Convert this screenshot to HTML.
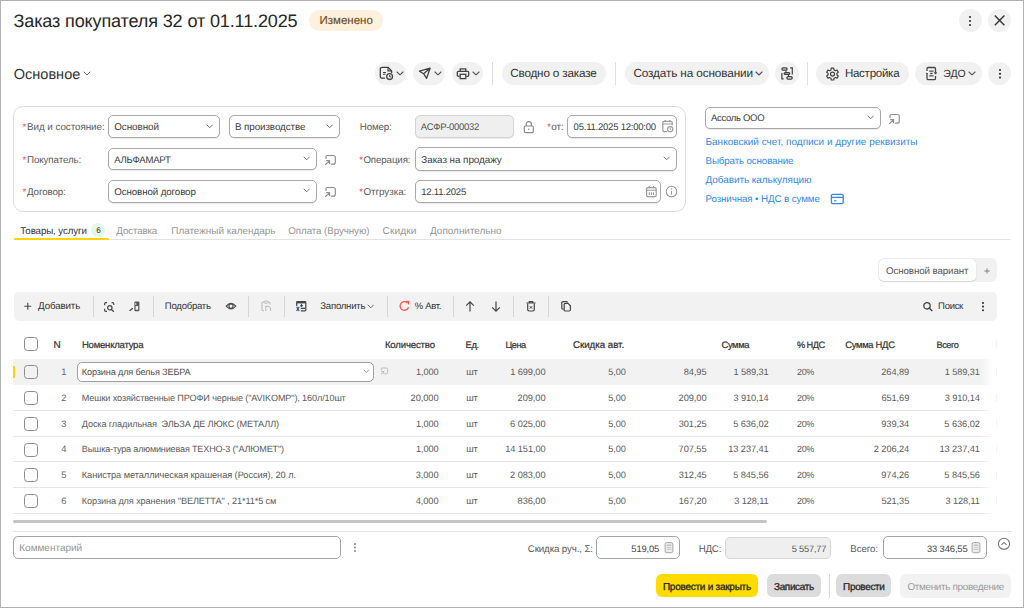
<!DOCTYPE html><html><head><meta charset="utf-8"><style>
html,body{margin:0;padding:0;width:1024px;height:608px;overflow:hidden;background:#fff;font-family:"Liberation Sans", sans-serif;text-rendering:geometricPrecision;}
#root{position:relative;width:1024px;height:608px;overflow:hidden;}
</style></head><body><div id="root">
<div style="position:absolute;left:0;top:0;width:1024px;height:608px;box-sizing:border-box;border:1px solid #b2b2b2"></div>
<div style="position:absolute;left:309px;top:10px;width:74px;height:21px;background:#fdf0dd;border-radius:10.5px;"></div>
<div style="position:absolute;left:958.8px;top:8.9px;width:23px;height:23px;background:#f1f1f1;border-radius:11.5px;"></div>
<svg style="position:absolute;left:967.2px;top:13.600000000000001px" width="6" height="14" viewBox="0 0 6 14" fill="none"><circle cx="3" cy="3" r="1.1" fill="#333"/><circle cx="3" cy="7" r="1.1" fill="#333"/><circle cx="3" cy="11" r="1.1" fill="#333"/></svg>
<div style="position:absolute;left:988px;top:8.9px;width:23px;height:23px;background:#f1f1f1;border-radius:11.5px;"></div>
<svg style="position:absolute;left:993px;top:14px" width="13" height="13" viewBox="0 0 13 13" fill="none"><path d="M1.8 1.6 L11.4 11.3 M11.4 1.6 L1.8 11.3" stroke="#333" stroke-width="1.4"/></svg>
<svg style="position:absolute;left:83.0px;top:71.0px" width="8" height="5" viewBox="0 0 8 5" fill="none"><path d="M1 1 L4.0 4 L7 1" stroke="#666" stroke-width="1" stroke-linecap="round" stroke-linejoin="round"/></svg>
<div style="position:absolute;left:375px;top:62px;width:31.3px;height:23px;background:#f1f1f1;border-radius:11.5px;"></div>
<svg style="position:absolute;left:379px;top:66px" width="16" height="16" viewBox="0 0 16 16" fill="none"><path d="M6 12.2 H3.3 Q1.3 12.2 1.3 10.2 V3.3 Q1.3 1.3 3.3 1.3 H9 L12.6 4.9 V7" stroke="#404040" stroke-width="1.3" stroke-linejoin="round"/><path d="M9 1.5 V4.9 H12.5" stroke="#404040" stroke-width="1.1"/><path d="M4 6.5 H7 M4 8.2 H6.5" stroke="#404040" stroke-width="1.1"/><circle cx="10.6" cy="10.6" r="2.9" stroke="#404040" stroke-width="1.3"/><path d="M10.6 9 V10.8 H12" stroke="#404040" stroke-width="1"/></svg>
<svg style="position:absolute;left:395.8px;top:70.89999999999999px" width="8" height="4.8" viewBox="0 0 8 4.8" fill="none"><path d="M1 1 L4.0 3.8 L7 1" stroke="#555" stroke-width="1.1" stroke-linecap="round" stroke-linejoin="round"/></svg>
<div style="position:absolute;left:413.4px;top:62px;width:31.2px;height:23px;background:#f1f1f1;border-radius:11.5px;"></div>
<svg style="position:absolute;left:418px;top:67px" width="14" height="13" viewBox="0 0 14 13" fill="none"><path d="M12.1 1.2 L1.5 4.2 L5.6 6.7 L8.6 11.4 Z M12.1 1.2 L5.6 6.7" stroke="#404040" stroke-width="1.3" stroke-linejoin="round"/></svg>
<svg style="position:absolute;left:434.0px;top:70.89999999999999px" width="8" height="4.8" viewBox="0 0 8 4.8" fill="none"><path d="M1 1 L4.0 3.8 L7 1" stroke="#555" stroke-width="1.1" stroke-linecap="round" stroke-linejoin="round"/></svg>
<div style="position:absolute;left:451.6px;top:62px;width:31.7px;height:23px;background:#f1f1f1;border-radius:11.5px;"></div>
<svg style="position:absolute;left:456px;top:67px" width="14" height="13" viewBox="0 0 14 13" fill="none"><path d="M4.2 4.3 V1.8 H9.8 V4.3" stroke="#404040" stroke-width="1.3"/><path d="M3.6 9.3 H2.4 Q1.3 9.3 1.3 8.2 V5.5 Q1.3 4.3 2.5 4.3 H11.5 Q12.7 4.3 12.7 5.5 V8.2 Q12.7 9.3 11.6 9.3 H10.4" stroke="#404040" stroke-width="1.3"/><rect x="4.2" y="7.3" width="5.6" height="4.3" stroke="#404040" stroke-width="1.3"/></svg>
<svg style="position:absolute;left:472.0px;top:70.89999999999999px" width="8" height="4.8" viewBox="0 0 8 4.8" fill="none"><path d="M1 1 L4.0 3.8 L7 1" stroke="#555" stroke-width="1.1" stroke-linecap="round" stroke-linejoin="round"/></svg>
<div style="position:absolute;left:491.8px;top:62px;width:1px;height:23px;background:#dedede;border-radius:0px;"></div>
<div style="position:absolute;left:501.6px;top:62px;width:104.4px;height:23px;background:#f1f1f1;border-radius:11.5px;"></div>
<div style="position:absolute;left:615px;top:62px;width:1px;height:23px;background:#dedede;border-radius:0px;"></div>
<div style="position:absolute;left:624.5px;top:62px;width:144.5px;height:23px;background:#f1f1f1;border-radius:11.5px;"></div>
<svg style="position:absolute;left:755.0px;top:71.1px" width="8" height="5" viewBox="0 0 8 5" fill="none"><path d="M1 1 L4.0 4 L7 1" stroke="#555" stroke-width="1.1" stroke-linecap="round" stroke-linejoin="round"/></svg>
<div style="position:absolute;left:775.1px;top:62px;width:23.7px;height:23px;background:#f1f1f1;border-radius:11.5px;"></div>
<svg style="position:absolute;left:779px;top:66px" width="16" height="16" viewBox="0 0 16 16" fill="none"><rect x="2.9" y="1.9" width="5.2" height="2.3" rx="1.1" stroke="#404040" stroke-width="1.25"/><rect x="5.2" y="6.5" width="5.5" height="1.9" rx="0.95" stroke="#404040" stroke-width="1.25"/><rect x="7.9" y="10.7" width="5.3" height="2.3" rx="1.1" stroke="#404040" stroke-width="1.25"/><path d="M7 4.5 V6.3 M9.5 8.5 V10.5" stroke="#404040" stroke-width="1"/><path d="M2.9 7 V12.9 H4.6 M11.1 1.9 H13.3 V8.6" stroke="#404040" stroke-width="1.2"/></svg>
<div style="position:absolute;left:807.3px;top:62px;width:1px;height:23px;background:#dedede;border-radius:0px;"></div>
<div style="position:absolute;left:816.4px;top:62px;width:92.4px;height:23px;background:#f1f1f1;border-radius:11.5px;"></div>
<svg style="position:absolute;left:825px;top:66.5px" width="15" height="15" viewBox="0 0 15 15" fill="none"><path d="M6.3 1.2 H8.7 L9.1 3 L10.4 3.7 L12.1 3.1 L13.3 5.2 L11.9 6.4 V7.8 L13.3 9 L12.1 11.1 L10.4 10.5 L9.1 11.2 L8.7 13 H6.3 L5.9 11.2 L4.6 10.5 L2.9 11.1 L1.7 9 L3.1 7.8 V6.4 L1.7 5.2 L2.9 3.1 L4.6 3.7 L5.9 3 Z" stroke="#404040" stroke-width="1.2" stroke-linejoin="round"/><circle cx="7.5" cy="7.1" r="2" stroke="#404040" stroke-width="1.2"/></svg>
<div style="position:absolute;left:915.2px;top:62px;width:66.5px;height:23px;background:#f1f1f1;border-radius:11.5px;"></div>
<svg style="position:absolute;left:924px;top:66px" width="14" height="15" viewBox="0 0 14 15" fill="none"><path d="M3 5 V2.6 Q3 1.5 4.3 1.5 H10.3 Q11.5 1.5 11.5 2.7 V6.8" stroke="#454545" stroke-width="1.3"/><path d="M3 7.5 V12.4 Q3 13.6 4.3 13.6 H10.3 Q11.5 13.6 11.5 12.4 V10" stroke="#454545" stroke-width="1.3"/><path d="M10.2 6.6 L11.5 8.3 L12.8 6.6 Z" fill="#454545" stroke="#454545" stroke-width="0.6"/><path d="M1.9 7.6 L3 7 L3.6 8" fill="#454545" stroke="#454545" stroke-width="0.8"/><path d="M5.2 5.2 H9.6 M6.2 7.5 H8.6 M5.2 9.8 H9.6" stroke="#505050" stroke-width="1.3"/></svg>
<svg style="position:absolute;left:967.6px;top:70.89999999999999px" width="8" height="4.8" viewBox="0 0 8 4.8" fill="none"><path d="M1 1 L4.0 3.8 L7 1" stroke="#555" stroke-width="1.1" stroke-linecap="round" stroke-linejoin="round"/></svg>
<div style="position:absolute;left:988px;top:62px;width:23.4px;height:23.3px;background:#f1f1f1;border-radius:11.7px;"></div>
<svg style="position:absolute;left:996.7px;top:66.8px" width="6" height="13.6" viewBox="0 0 6 13.6" fill="none"><circle cx="3" cy="3.0" r="1.1" fill="#333"/><circle cx="3" cy="6.8" r="1.1" fill="#333"/><circle cx="3" cy="10.6" r="1.1" fill="#333"/></svg>
<div style="position:absolute;left:13px;top:106.2px;width:673px;height:105.6px;background:#fff;border:1px solid #dcdcdc;box-sizing:border-box;border-radius:10px;"></div>
<div style="position:absolute;left:108.3px;top:115.3px;width:111.5px;height:22.8px;background:#fff;border:1.15px solid #a8a8a8;box-sizing:border-box;border-radius:5px;box-shadow:0 0.7px 0 rgba(0,0,0,0.10)"></div>
<svg style="position:absolute;left:206.3px;top:123.95px" width="7.4" height="4.7" viewBox="0 0 7.4 4.7" fill="none"><path d="M1 1 L3.7 3.7 L6.4 1" stroke="#707070" stroke-width="1" stroke-linecap="round" stroke-linejoin="round"/></svg>
<div style="position:absolute;left:229.4px;top:115.3px;width:110.5px;height:22.8px;background:#fff;border:1.15px solid #a8a8a8;box-sizing:border-box;border-radius:5px;box-shadow:0 0.7px 0 rgba(0,0,0,0.10)"></div>
<svg style="position:absolute;left:325.8px;top:123.95px" width="7.4" height="4.7" viewBox="0 0 7.4 4.7" fill="none"><path d="M1 1 L3.7 3.7 L6.4 1" stroke="#707070" stroke-width="1" stroke-linecap="round" stroke-linejoin="round"/></svg>
<div style="position:absolute;left:415.3px;top:115.3px;width:99px;height:22.8px;background:#efefef;border:1.15px solid #d4d4d4;box-sizing:border-box;border-radius:5px;box-shadow:0 0.7px 0 rgba(0,0,0,0.10)"></div>
<svg style="position:absolute;left:522px;top:119.5px" width="13" height="14" viewBox="0 0 13 14" fill="none"><path d="M4.2 6 V4.2 Q4.2 1.7 6.8 1.7 Q9.4 1.7 9.4 4.2 V6" stroke="#8a8a8a" stroke-width="1.2"/><rect x="2.3" y="6" width="9" height="6.6" rx="1.3" stroke="#8a8a8a" stroke-width="1.2"/><circle cx="6.8" cy="9.3" r="0.8" fill="#8a8a8a"/></svg>
<div style="position:absolute;left:567.4px;top:115.2px;width:109.4px;height:23.1px;background:#fff;border:1.15px solid #a8a8a8;box-sizing:border-box;border-radius:5px;box-shadow:0 0.7px 0 rgba(0,0,0,0.10)"></div>
<svg style="position:absolute;left:661px;top:119px" width="13" height="14" viewBox="0 0 13 14" fill="none"><path d="M6 12.6 H3.1 Q1.8 12.6 1.8 11.3 V3.6 Q1.8 2.4 3 2.4 H10 Q11.2 2.4 11.2 3.6 V6.2" stroke="#999" stroke-width="1.2"/><path d="M1.8 5 H11.2 M4.2 1 V3.2 M8.8 1 V3.2" stroke="#999" stroke-width="1.2"/><circle cx="9.2" cy="10.2" r="2.6" stroke="#999" stroke-width="1.1" fill="#fff"/><path d="M9.2 8.9 V10.3 L10.2 11" stroke="#999" stroke-width="0.9"/></svg>
<div style="position:absolute;left:108.3px;top:147.7px;width:208.5px;height:22.7px;background:#fff;border:1.15px solid #a8a8a8;box-sizing:border-box;border-radius:5px;box-shadow:0 0.7px 0 rgba(0,0,0,0.10)"></div>
<svg style="position:absolute;left:302.6px;top:156.25px" width="7.4" height="4.7" viewBox="0 0 7.4 4.7" fill="none"><path d="M1 1 L3.7 3.7 L6.4 1" stroke="#707070" stroke-width="1" stroke-linecap="round" stroke-linejoin="round"/></svg>
<svg style="position:absolute;left:323.5px;top:153.8px" width="13.0" height="12.0" viewBox="0 0 13 12" fill="none"><path d="M2 4.5 V2.8 Q2 1.5 3.3 1.5 H9.3 Q11.3 1.5 11.3 3.5 V8.2 Q11.3 10.2 9.3 10.2 H7.3" stroke="#8f8f8f" stroke-width="1.2" stroke-linecap="round"/><path d="M1.6 10.6 L5.6 6.6 M2.6 6.6 H5.6 V9.6" stroke="#8f8f8f" stroke-width="1.2" stroke-linecap="round" stroke-linejoin="round"/></svg>
<div style="position:absolute;left:415.3px;top:147.4px;width:261.5px;height:23.2px;background:#fff;border:1.15px solid #a8a8a8;box-sizing:border-box;border-radius:5px;box-shadow:0 0.7px 0 rgba(0,0,0,0.10)"></div>
<svg style="position:absolute;left:663.3px;top:156.45000000000002px" width="7.4" height="4.7" viewBox="0 0 7.4 4.7" fill="none"><path d="M1 1 L3.7 3.7 L6.4 1" stroke="#707070" stroke-width="1" stroke-linecap="round" stroke-linejoin="round"/></svg>
<div style="position:absolute;left:108.3px;top:180px;width:208.5px;height:22.7px;background:#fff;border:1.15px solid #a8a8a8;box-sizing:border-box;border-radius:5px;box-shadow:0 0.7px 0 rgba(0,0,0,0.10)"></div>
<svg style="position:absolute;left:302.6px;top:188.45000000000002px" width="7.4" height="4.7" viewBox="0 0 7.4 4.7" fill="none"><path d="M1 1 L3.7 3.7 L6.4 1" stroke="#707070" stroke-width="1" stroke-linecap="round" stroke-linejoin="round"/></svg>
<svg style="position:absolute;left:323.5px;top:186px" width="13.0" height="12.0" viewBox="0 0 13 12" fill="none"><path d="M2 4.5 V2.8 Q2 1.5 3.3 1.5 H9.3 Q11.3 1.5 11.3 3.5 V8.2 Q11.3 10.2 9.3 10.2 H7.3" stroke="#8f8f8f" stroke-width="1.2" stroke-linecap="round"/><path d="M1.6 10.6 L5.6 6.6 M2.6 6.6 H5.6 V9.6" stroke="#8f8f8f" stroke-width="1.2" stroke-linecap="round" stroke-linejoin="round"/></svg>
<div style="position:absolute;left:415.3px;top:179.5px;width:245.5px;height:23.2px;background:#fff;border:1.15px solid #a8a8a8;box-sizing:border-box;border-radius:5px;box-shadow:0 0.7px 0 rgba(0,0,0,0.10)"></div>
<svg style="position:absolute;left:644.5px;top:185px" width="13" height="13" viewBox="0 0 13 13" fill="none"><rect x="1.6" y="2.6" width="9.6" height="9" rx="1.3" stroke="#999" stroke-width="1.2"/><path d="M1.6 5.3 H11.2 M4.2 1 V3.2 M8.6 1 V3.2 M4.3 7.3 V10 M6.4 7.3 V10 M8.5 7.3 V10" stroke="#999" stroke-width="1.1"/></svg>
<svg style="position:absolute;left:665px;top:185px" width="13" height="13" viewBox="0 0 13 13" fill="none"><circle cx="6.5" cy="6.6" r="5.3" stroke="#999" stroke-width="1.1"/><path d="M6.5 5.8 V9.6" stroke="#999" stroke-width="1.1"/><circle cx="6.5" cy="3.9" r="0.7" fill="#999"/></svg>
<div style="position:absolute;left:705px;top:106.6px;width:175.6px;height:22.7px;background:#fff;border:1.15px solid #a8a8a8;box-sizing:border-box;border-radius:5px;box-shadow:0 0.7px 0 rgba(0,0,0,0.10)"></div>
<svg style="position:absolute;left:866.5999999999999px;top:115.25px" width="7.4" height="4.7" viewBox="0 0 7.4 4.7" fill="none"><path d="M1 1 L3.7 3.7 L6.4 1" stroke="#707070" stroke-width="1" stroke-linecap="round" stroke-linejoin="round"/></svg>
<svg style="position:absolute;left:887.5px;top:112.5px" width="13.0" height="12.0" viewBox="0 0 13 12" fill="none"><path d="M2 4.5 V2.8 Q2 1.5 3.3 1.5 H9.3 Q11.3 1.5 11.3 3.5 V8.2 Q11.3 10.2 9.3 10.2 H7.3" stroke="#8f8f8f" stroke-width="1.2" stroke-linecap="round"/><path d="M1.6 10.6 L5.6 6.6 M2.6 6.6 H5.6 V9.6" stroke="#8f8f8f" stroke-width="1.2" stroke-linecap="round" stroke-linejoin="round"/></svg>
<svg style="position:absolute;left:830px;top:192.5px" width="15" height="12" viewBox="0 0 15 12" fill="none"><rect x="1.4" y="1.4" width="11.8" height="9.2" rx="1.3" stroke="#2f89ec" stroke-width="1.3"/><path d="M1.4 4.4 H13.2" stroke="#2f89ec" stroke-width="1.3"/><path d="M4 7.8 H6.5" stroke="#2f89ec" stroke-width="1.1"/></svg>
<div style="position:absolute;left:90.6px;top:222.8px;width:14.5px;height:14.5px;background:#e6f7e9;border-radius:7.25px;"></div>
<div style="position:absolute;left:13.7px;top:238.8px;width:997.7px;height:1px;background:#e3e3e3;border-radius:0px;"></div>
<div style="position:absolute;left:13.7px;top:238px;width:95.1px;height:2.2px;background:#fcd400;border-radius:1px;"></div>
<div style="position:absolute;left:877.9px;top:258px;width:119.1px;height:24.2px;background:#f1f1f1;border-radius:6px;"></div>
<div style="position:absolute;left:878.6px;top:259px;width:97.4px;height:22px;background:#fff;border-radius:5px;box-shadow:0 0.5px 1.5px rgba(0,0,0,0.12)"></div>
<svg style="position:absolute;left:981px;top:264.5px" width="12" height="12" viewBox="0 0 12 12" fill="none"><path d="M6 3.4 V8.6 M3.4 6 H8.6" stroke="#777" stroke-width="0.9"/></svg>
<div style="position:absolute;left:13.6px;top:291.8px;width:983.6px;height:29px;background:#f2f2f2;border-radius:5px;"></div>
<svg style="position:absolute;left:22px;top:300px" width="12" height="12" viewBox="0 0 12 12" fill="none"><path d="M5.8 2.8 V9.7 M2.3 6.2 H9.3" stroke="#4a4a4a" stroke-width="1.15"/></svg>
<div style="position:absolute;left:92.5px;top:296px;width:1px;height:20.5px;background:#d6d6d6;border-radius:0px;"></div>
<svg style="position:absolute;left:103px;top:300.5px" width="13" height="12" viewBox="0 0 13 12" fill="none"><path d="M1.6 4.3 V2.9 Q1.6 1.6 2.9 1.6 H4 M1.6 7.7 V9.1 Q1.6 10.4 2.9 10.4 H4 M8.6 1.6 H9.5 Q10.8 1.6 10.8 2.9 V4" stroke="#444" stroke-width="1.2"/><circle cx="6.8" cy="6.8" r="2.2" stroke="#444" stroke-width="1.2"/><path d="M8.4 8.4 L10.8 10.8" stroke="#444" stroke-width="1.3"/></svg>
<svg style="position:absolute;left:128px;top:300px" width="13" height="12" viewBox="0 0 13 12" fill="none"><rect x="6.4" y="1.4" width="5" height="9.8" rx="1" fill="#555"/><rect x="7.6" y="6" width="2.6" height="3.8" fill="#f0f0f0"/><path d="M7.8 2.8 V5" stroke="#f0f0f0" stroke-width="0.9"/><path d="M1.6 10.8 L4.8 8.2" stroke="#444" stroke-width="1.3"/></svg>
<div style="position:absolute;left:152.7px;top:296px;width:1px;height:20.5px;background:#d6d6d6;border-radius:0px;"></div>
<svg style="position:absolute;left:224.5px;top:301px" width="12" height="10" viewBox="0 0 12 10" fill="none"><path d="M1.2 5.1 Q6 -0.3 10.8 5.1 Q6 10.5 1.2 5.1 Z" stroke="#4a4a4a" stroke-width="1.15"/><circle cx="6" cy="5.1" r="2.1" stroke="#4a4a4a" stroke-width="1.1"/></svg>
<div style="position:absolute;left:248.4px;top:296px;width:1px;height:20.5px;background:#d6d6d6;border-radius:0px;"></div>
<svg style="position:absolute;left:259.5px;top:300px" width="12" height="12" viewBox="0 0 12 12" fill="none"><path d="M4 10.8 H3 Q2 10.8 2 9.8 V3 Q2 2 3 2 H4 M8 2 H9 Q10 2 10 3 V4.5" stroke="#bdbdbd" stroke-width="1.1"/><rect x="4" y="1.2" width="4" height="2" rx="0.6" stroke="#bdbdbd" stroke-width="1"/><path d="M5.8 11 V6.2 H8.6 L10.6 8.2 V11" stroke="#bdbdbd" stroke-width="1.1"/></svg>
<div style="position:absolute;left:283.6px;top:296px;width:1px;height:20.5px;background:#d6d6d6;border-radius:0px;"></div>
<svg style="position:absolute;left:295px;top:300px" width="12" height="12" viewBox="0 0 12 12" fill="none"><path d="M1.7 6 V2.4 Q1.7 1.6 2.5 1.6 H10 Q10.8 1.6 10.8 2.4 V10 Q10.8 10.8 10 10.8 H5.8" stroke="#454545" stroke-width="1.2"/><path d="M1.7 2.6 H10.8" stroke="#454545" stroke-width="1.6"/><path d="M6.5 3.8 V6.3 M5.3 5.3 L6.5 6.5 L7.7 5.3 M5.8 8.4 H10.2" stroke="#454545" stroke-width="1.1"/><path d="M1.6 6.8 L4.2 10.8 M4.2 6.8 L1.6 10.8" stroke="#2b5a8a" stroke-width="1.2"/></svg>
<svg style="position:absolute;left:366.75px;top:303.90000000000003px" width="7.5" height="4.8" viewBox="0 0 7.5 4.8" fill="none"><path d="M1 1 L3.75 3.8 L6.5 1" stroke="#666" stroke-width="1" stroke-linecap="round" stroke-linejoin="round"/></svg>
<div style="position:absolute;left:386.7px;top:296px;width:1px;height:20.5px;background:#d6d6d6;border-radius:0px;"></div>
<svg style="position:absolute;left:397.5px;top:300px" width="13" height="12" viewBox="0 0 13 12" fill="none"><path d="M9.6 3.1 A4.3 4.3 0 1 0 10.5 7.2" stroke="#f4564b" stroke-width="1.3" fill="none"/><path d="M7.6 1.6 L10.6 1.4 L10.4 4.4" stroke="#f4564b" stroke-width="1.3" fill="none" stroke-linejoin="round"/></svg>
<div style="position:absolute;left:453.4px;top:296px;width:1px;height:20.5px;background:#d6d6d6;border-radius:0px;"></div>
<svg style="position:absolute;left:464.3px;top:299.8px" width="12" height="13" viewBox="0 0 12 13" fill="none"><path d="M6 11.5 V1.8 M2.2 5.6 L6 1.8 L9.8 5.6" stroke="#444" stroke-width="1.2"/></svg>
<svg style="position:absolute;left:489.5px;top:299.8px" width="12" height="13" viewBox="0 0 12 13" fill="none"><path d="M6 1.5 V11.2 M2.2 7.4 L6 11.2 L9.8 7.4" stroke="#444" stroke-width="1.2"/></svg>
<div style="position:absolute;left:513.3px;top:296px;width:1px;height:20.5px;background:#d6d6d6;border-radius:0px;"></div>
<svg style="position:absolute;left:524.7px;top:300px" width="12" height="12" viewBox="0 0 12 12" fill="none"><path d="M2.7 3.8 V9.6 Q2.7 11 4.1 11 H7.9 Q9.3 11 9.3 9.6 V3.8 M1.4 3 H10.6 M4.3 3 V1.6 H7.7 V3" stroke="#444" stroke-width="1.2"/><path d="M4.8 6.2 L7.2 8.6 M7.2 6.2 L4.8 8.6" stroke="#444" stroke-width="1"/></svg>
<div style="position:absolute;left:548.4px;top:296px;width:1px;height:20.5px;background:#d6d6d6;border-radius:0px;"></div>
<svg style="position:absolute;left:560px;top:300px" width="12" height="12" viewBox="0 0 12 12" fill="none"><path d="M3.6 9.2 H3 Q1.8 9.2 1.8 8 V2.8 Q1.8 1.6 3 1.6 H6.6 Q7.6 1.6 7.6 2.6" stroke="#444" stroke-width="1.2"/><path d="M4.2 10.6 V4.6 Q4.2 3.4 5.4 3.4 H8 L10.4 5.8 V9.8 Q10.4 11 9.2 11 H5.4 Q4.2 11 4.2 10.6" stroke="#444" stroke-width="1.2"/></svg>
<svg style="position:absolute;left:921.5px;top:301px" width="12" height="11" viewBox="0 0 12 11" fill="none"><circle cx="5" cy="4.8" r="3.2" stroke="#444" stroke-width="1.3"/><path d="M7.4 7.2 L10.3 10.1" stroke="#444" stroke-width="1.4"/></svg>
<svg style="position:absolute;left:979.7px;top:299.59999999999997px" width="6" height="13.2" viewBox="0 0 6 13.2" fill="none"><circle cx="3" cy="3.0" r="1.05" fill="#333"/><circle cx="3" cy="6.6" r="1.05" fill="#333"/><circle cx="3" cy="10.2" r="1.05" fill="#333"/></svg>
<div style="position:absolute;left:23.9px;top:337.2px;width:14px;height:14px;background:none;border:1.3px solid #8c8c8c;box-sizing:border-box;border-radius:3.5px;"></div>
<div style="position:absolute;left:13.1px;top:359px;width:984px;height:25.8px;background:#f2f2f2;border-radius:0px;"></div>
<div style="position:absolute;left:13.2px;top:366px;width:2px;height:11.5px;background:#fcd400;border-radius:0px;"></div>
<div style="position:absolute;left:13.2px;top:409.9px;width:984px;height:1px;background:#e6e6e6;border-radius:0px;"></div>
<div style="position:absolute;left:13.2px;top:435.65px;width:984px;height:1px;background:#e6e6e6;border-radius:0px;"></div>
<div style="position:absolute;left:13.2px;top:461.4px;width:984px;height:1px;background:#e6e6e6;border-radius:0px;"></div>
<div style="position:absolute;left:13.2px;top:487.1px;width:984px;height:1px;background:#e6e6e6;border-radius:0px;"></div>
<div style="position:absolute;left:13.2px;top:512.9px;width:984px;height:1px;background:#e6e6e6;border-radius:0px;"></div>
<div style="position:absolute;left:23.8px;top:365.3px;width:14px;height:14px;background:none;border:1.3px solid #8c8c8c;box-sizing:border-box;border-radius:3.5px;"></div>
<div style="position:absolute;left:77.2px;top:362.1px;width:297.2px;height:19.6px;background:#fff;border:1px solid #a0a0a0;box-sizing:border-box;border-radius:5px;"></div>
<svg style="position:absolute;left:363.20000000000005px;top:368.85px" width="6.8" height="4.5" viewBox="0 0 6.8 4.5" fill="none"><path d="M1 1 L3.4 3.5 L5.8 1" stroke="#8a8a8a" stroke-width="0.9" stroke-linecap="round" stroke-linejoin="round"/></svg>
<svg style="position:absolute;left:380px;top:367.3px" width="8.84" height="8.16" viewBox="0 0 13 12" fill="none"><path d="M2 4.5 V2.8 Q2 1.5 3.3 1.5 H9.3 Q11.3 1.5 11.3 3.5 V8.2 Q11.3 10.2 9.3 10.2 H7.3" stroke="#b0b0b0" stroke-width="1.2" stroke-linecap="round"/><path d="M1.6 10.6 L5.6 6.6 M2.6 6.6 H5.6 V9.6" stroke="#b0b0b0" stroke-width="1.2" stroke-linecap="round" stroke-linejoin="round"/></svg>
<div style="position:absolute;left:23.8px;top:391.3px;width:14px;height:14px;background:none;border:1.3px solid #8c8c8c;box-sizing:border-box;border-radius:3.5px;"></div>
<div style="position:absolute;left:23.8px;top:417.0px;width:14px;height:14px;background:none;border:1.3px solid #8c8c8c;box-sizing:border-box;border-radius:3.5px;"></div>
<div style="position:absolute;left:23.8px;top:442.7px;width:14px;height:14px;background:none;border:1.3px solid #8c8c8c;box-sizing:border-box;border-radius:3.5px;"></div>
<div style="position:absolute;left:23.8px;top:468.4px;width:14px;height:14px;background:none;border:1.3px solid #8c8c8c;box-sizing:border-box;border-radius:3.5px;"></div>
<div style="position:absolute;left:23.8px;top:494.1px;width:14px;height:14px;background:none;border:1.3px solid #8c8c8c;box-sizing:border-box;border-radius:3.5px;"></div>
<div style="position:absolute;left:980px;top:330px;width:18px;height:190px;background:linear-gradient(to right, rgba(255,255,255,0), #fff 75%)"></div>
<div style="position:absolute;left:995.5px;top:340px;width:1.5px;height:8px;background:#f4f4f4;border-radius:0px;"></div>
<div style="position:absolute;left:995.5px;top:367.5px;width:1.5px;height:8px;background:#f4f4f4;border-radius:0px;"></div>
<div style="position:absolute;left:995.5px;top:393.5px;width:1.5px;height:8px;background:#f4f4f4;border-radius:0px;"></div>
<div style="position:absolute;left:995.5px;top:419px;width:1.5px;height:8px;background:#f4f4f4;border-radius:0px;"></div>
<div style="position:absolute;left:995.5px;top:445px;width:1.5px;height:8px;background:#f4f4f4;border-radius:0px;"></div>
<div style="position:absolute;left:995.5px;top:470.5px;width:1.5px;height:8px;background:#f4f4f4;border-radius:0px;"></div>
<div style="position:absolute;left:995.5px;top:496px;width:1.5px;height:8px;background:#f4f4f4;border-radius:0px;"></div>
<div style="position:absolute;left:13.2px;top:519.8px;width:754px;height:3.4px;background:#c4c4c4;border-radius:1.7px;"></div>
<div style="position:absolute;left:13.4px;top:530.5px;width:998.3px;height:1px;background:#e3e3e3;border-radius:0px;"></div>
<div style="position:absolute;left:13.4px;top:536.1px;width:327.2px;height:23px;background:#fff;border:1px solid #a3a3a3;box-sizing:border-box;border-radius:5px;"></div>
<svg style="position:absolute;left:352.1px;top:541.1px" width="6" height="13.0" viewBox="0 0 6 13.0" fill="none"><circle cx="3" cy="3.0" r="1.05" fill="#888"/><circle cx="3" cy="6.5" r="1.05" fill="#888"/><circle cx="3" cy="10.0" r="1.05" fill="#888"/></svg>
<div style="position:absolute;left:596.2px;top:536.2px;width:83.6px;height:23.1px;background:#fff;border:1px solid #a3a3a3;box-sizing:border-box;border-radius:5px;"></div>
<svg style="position:absolute;left:664px;top:542.2px" width="10" height="12" viewBox="0 0 10 12" fill="none"><rect x="1.1" y="0.6" width="7.8" height="10.1" rx="1.6" fill="#ececec" stroke="#a6a6a6" stroke-width="1"/><path d="M2.8 3.2 H7.2" stroke="#a6a6a6" stroke-width="0.9"/><path d="M2.8 5.6 H7.2 M2.8 7.4 H7.2" stroke="#c4c4c4" stroke-width="0.9"/></svg>
<div style="position:absolute;left:725.3px;top:536.6px;width:105.4px;height:22.8px;background:#efefef;border:1px solid #d6d6d6;box-sizing:border-box;border-radius:5px;"></div>
<div style="position:absolute;left:882.6px;top:536.2px;width:104.7px;height:23.1px;background:#fff;border:1px solid #a3a3a3;box-sizing:border-box;border-radius:5px;"></div>
<svg style="position:absolute;left:971.2px;top:542.2px" width="10" height="12" viewBox="0 0 10 12" fill="none"><rect x="1.1" y="0.6" width="7.8" height="10.1" rx="1.6" fill="#ececec" stroke="#a6a6a6" stroke-width="1"/><path d="M2.8 3.2 H7.2" stroke="#a6a6a6" stroke-width="0.9"/><path d="M2.8 5.6 H7.2 M2.8 7.4 H7.2" stroke="#c4c4c4" stroke-width="0.9"/></svg>
<svg style="position:absolute;left:997px;top:537px" width="14" height="14" viewBox="0 0 14 14" fill="none"><circle cx="7" cy="6.8" r="5.6" stroke="#777" stroke-width="1.1"/><path d="M4.4 7.9 L7 5.4 L9.6 7.9" stroke="#777" stroke-width="1.1"/></svg>
<div style="position:absolute;left:656px;top:573.9px;width:102.1px;height:23.6px;background:#ffdb00;border-radius:6px;"></div>
<div style="position:absolute;left:767px;top:573.9px;width:54px;height:23.6px;background:#dcdcdc;border-radius:6px;"></div>
<div style="position:absolute;left:829px;top:574px;width:1px;height:23.5px;background:#d8d8d8;border-radius:0px;"></div>
<div style="position:absolute;left:836.3px;top:573.9px;width:55.1px;height:23.6px;background:#dcdcdc;border-radius:6px;"></div>
<div style="position:absolute;left:900.4px;top:574.1px;width:110.6px;height:23.5px;background:#f2f2f2;border-radius:6px;"></div>
<div style="position:absolute;left:13.50px;top:11.61px;font-size:18.09px;line-height:18.09px;font-weight:400;color:#262626;letter-spacing:-0.151px;white-space:pre;">Заказ покупателя 32 от 01.11.2025</div>
<div style="position:absolute;left:319.50px;top:16.20px;font-size:11.51px;line-height:11.51px;font-weight:400;color:#6c4b22;letter-spacing:0.004px;white-space:pre;-webkit-text-stroke:0.12px currentColor">Изменено</div>
<div style="position:absolute;left:13.70px;top:67.61px;font-size:14.52px;line-height:14.52px;font-weight:400;color:#333;letter-spacing:0.016px;white-space:pre;">Основное</div>
<div style="position:absolute;left:510.20px;top:68.11px;font-size:11.7px;line-height:11.7px;font-weight:400;color:#333;letter-spacing:-0.161px;white-space:pre;">Сводно о заказе</div>
<div style="position:absolute;left:633.40px;top:68.11px;font-size:11.77px;line-height:11.77px;font-weight:400;color:#333;letter-spacing:-0.125px;white-space:pre;">Создать на основании</div>
<div style="position:absolute;left:844.90px;top:69.31px;font-size:11.55px;line-height:11.55px;font-weight:400;color:#333;letter-spacing:-0.270px;white-space:pre;">Настройка</div>
<div style="position:absolute;left:943.30px;top:69.00px;font-size:10.5px;line-height:10.5px;font-weight:400;color:#333;letter-spacing:-0.109px;white-space:pre;">ЭДО</div>
<div style="position:absolute;left:22.40px;top:122.76px;font-size:9.5px;line-height:9.5px;font-weight:400;color:#e8413c;letter-spacing:0.000px;white-space:pre;">*</div>
<div style="position:absolute;left:27.00px;top:123.06px;font-size:9.87px;line-height:9.87px;font-weight:400;color:#5a5a5a;letter-spacing:-0.067px;white-space:pre;">Вид и состояние:</div>
<div style="position:absolute;left:114.20px;top:123.15px;font-size:9.9px;line-height:9.9px;font-weight:400;color:#3c3c3c;letter-spacing:-0.061px;white-space:pre;">Основной</div>
<div style="position:absolute;left:235.00px;top:123.15px;font-size:9.83px;line-height:9.83px;font-weight:400;color:#3c3c3c;letter-spacing:-0.096px;white-space:pre;">В производстве</div>
<div style="position:absolute;left:359.80px;top:123.06px;font-size:9.76px;line-height:9.76px;font-weight:400;color:#5a5a5a;letter-spacing:-0.156px;white-space:pre;">Номер:</div>
<div style="position:absolute;left:420.80px;top:123.16px;font-size:9.52px;line-height:9.52px;font-weight:400;color:#555;letter-spacing:-0.297px;white-space:pre;">АСФР-000032</div>
<div style="position:absolute;left:547.30px;top:122.76px;font-size:9.5px;line-height:9.5px;font-weight:400;color:#e8413c;letter-spacing:0.000px;white-space:pre;">*</div>
<div style="position:absolute;left:551.20px;top:123.05px;font-size:9.95px;line-height:9.95px;font-weight:400;color:#5a5a5a;letter-spacing:-0.030px;white-space:pre;">от:</div>
<div style="position:absolute;left:573.60px;top:123.15px;font-size:9.53px;line-height:9.53px;font-weight:400;color:#3c3c3c;letter-spacing:-0.229px;white-space:pre;">05.11.2025 12:00:00</div>
<div style="position:absolute;left:22.40px;top:155.95px;font-size:9.5px;line-height:9.5px;font-weight:400;color:#e8413c;letter-spacing:0.000px;white-space:pre;">*</div>
<div style="position:absolute;left:27.00px;top:156.27px;font-size:9.8px;line-height:9.8px;font-weight:400;color:#5a5a5a;letter-spacing:-0.111px;white-space:pre;">Покупатель:</div>
<div style="position:absolute;left:114.20px;top:156.26px;font-size:9.61px;line-height:9.61px;font-weight:400;color:#3c3c3c;letter-spacing:-0.287px;white-space:pre;">АЛЬФАМАРТ</div>
<div style="position:absolute;left:359.30px;top:155.95px;font-size:9.5px;line-height:9.5px;font-weight:400;color:#e8413c;letter-spacing:0.000px;white-space:pre;">*</div>
<div style="position:absolute;left:363.40px;top:156.26px;font-size:9.77px;line-height:9.77px;font-weight:400;color:#5a5a5a;letter-spacing:-0.136px;white-space:pre;">Операция:</div>
<div style="position:absolute;left:421.30px;top:156.25px;font-size:9.89px;line-height:9.89px;font-weight:400;color:#3c3c3c;letter-spacing:-0.059px;white-space:pre;">Заказ на продажу</div>
<div style="position:absolute;left:22.40px;top:187.95px;font-size:9.5px;line-height:9.5px;font-weight:400;color:#e8413c;letter-spacing:0.000px;white-space:pre;">*</div>
<div style="position:absolute;left:27.00px;top:188.25px;font-size:9.78px;line-height:9.78px;font-weight:400;color:#5a5a5a;letter-spacing:-0.124px;white-space:pre;">Договор:</div>
<div style="position:absolute;left:114.20px;top:188.46px;font-size:9.79px;line-height:9.79px;font-weight:400;color:#3c3c3c;letter-spacing:-0.118px;white-space:pre;">Основной договор</div>
<div style="position:absolute;left:359.30px;top:187.95px;font-size:9.5px;line-height:9.5px;font-weight:400;color:#e8413c;letter-spacing:0.000px;white-space:pre;">*</div>
<div style="position:absolute;left:363.40px;top:188.26px;font-size:9.9px;line-height:9.9px;font-weight:400;color:#5a5a5a;letter-spacing:-0.056px;white-space:pre;">Отгрузка:</div>
<div style="position:absolute;left:421.30px;top:188.46px;font-size:9.55px;line-height:9.55px;font-weight:400;color:#3c3c3c;letter-spacing:-0.236px;white-space:pre;">12.11.2025</div>
<div style="position:absolute;left:710.90px;top:114.15px;font-size:9.53px;line-height:9.53px;font-weight:400;color:#3c3c3c;letter-spacing:-0.298px;white-space:pre;">Ассоль ООО</div>
<div style="position:absolute;left:705.50px;top:138.36px;font-size:10.0px;line-height:10.0px;font-weight:400;color:#2f89ec;letter-spacing:-0.002px;white-space:pre;">Банковский счет, подписи и другие реквизиты</div>
<div style="position:absolute;left:705.50px;top:157.06px;font-size:9.77px;line-height:9.77px;font-weight:400;color:#2f89ec;letter-spacing:-0.129px;white-space:pre;">Выбрать основание</div>
<div style="position:absolute;left:705.50px;top:175.85px;font-size:9.94px;line-height:9.94px;font-weight:400;color:#2f89ec;letter-spacing:-0.034px;white-space:pre;">Добавить калькуляцию</div>
<div style="position:absolute;left:705.50px;top:195.15px;font-size:9.79px;line-height:9.79px;font-weight:400;color:#2f89ec;letter-spacing:-0.112px;white-space:pre;">Розничная • НДС в сумме</div>
<div style="position:absolute;left:20.30px;top:227.00px;font-size:9.76px;line-height:9.76px;font-weight:400;color:#333;letter-spacing:-0.126px;white-space:pre;">Товары, услуги</div>
<div style="position:absolute;left:96.30px;top:226.60px;font-size:8.2px;line-height:8.2px;font-weight:400;color:#333;letter-spacing:0.000px;white-space:pre;">6</div>
<div style="position:absolute;left:116.30px;top:227.00px;font-size:9.78px;line-height:9.78px;font-weight:400;color:#959595;letter-spacing:-0.133px;white-space:pre;">Доставка</div>
<div style="position:absolute;left:171.30px;top:227.00px;font-size:9.95px;line-height:9.95px;font-weight:400;color:#959595;letter-spacing:-0.030px;white-space:pre;">Платежный календарь</div>
<div style="position:absolute;left:288.30px;top:227.00px;font-size:9.82px;line-height:9.82px;font-weight:400;color:#959595;letter-spacing:-0.098px;white-space:pre;">Оплата (Вручную)</div>
<div style="position:absolute;left:382.60px;top:227.00px;font-size:10.15px;line-height:10.15px;font-weight:400;color:#959595;letter-spacing:0.102px;white-space:pre;">Скидки</div>
<div style="position:absolute;left:430.00px;top:227.01px;font-size:9.98px;line-height:9.98px;font-weight:400;color:#959595;letter-spacing:-0.013px;white-space:pre;">Дополнительно</div>
<div style="position:absolute;left:886.00px;top:266.62px;font-size:9.79px;line-height:9.79px;font-weight:400;color:#555;letter-spacing:-0.119px;white-space:pre;">Основной вариант</div>
<div style="position:absolute;left:38.10px;top:301.81px;font-size:9.77px;line-height:9.77px;font-weight:400;color:#333;letter-spacing:-0.140px;white-space:pre;">Добавить</div>
<div style="position:absolute;left:164.80px;top:301.80px;font-size:9.58px;line-height:9.58px;font-weight:400;color:#333;letter-spacing:-0.253px;white-space:pre;">Подобрать</div>
<div style="position:absolute;left:320.30px;top:301.81px;font-size:9.59px;line-height:9.59px;font-weight:400;color:#333;letter-spacing:-0.238px;white-space:pre;">Заполнить</div>
<div style="position:absolute;left:414.80px;top:301.80px;font-size:9.45px;line-height:9.45px;font-weight:400;color:#333;letter-spacing:-0.302px;white-space:pre;">% Авт.</div>
<div style="position:absolute;left:938.10px;top:301.81px;font-size:9.54px;line-height:9.54px;font-weight:400;color:#333;letter-spacing:-0.309px;white-space:pre;">Поиск</div>
<div style="position:absolute;left:53.40px;top:340.81px;font-size:9.9px;line-height:9.9px;font-weight:400;color:#333;letter-spacing:0.000px;white-space:pre;-webkit-text-stroke:0.22px currentColor">N</div>
<div style="position:absolute;left:81.90px;top:340.81px;font-size:9.54px;line-height:9.54px;font-weight:400;color:#333;letter-spacing:-0.213px;white-space:pre;-webkit-text-stroke:0.22px currentColor">Номенклатура</div>
<div style="position:absolute;left:384.90px;top:340.80px;font-size:9.62px;line-height:9.62px;font-weight:400;color:#333;letter-spacing:-0.166px;white-space:pre;-webkit-text-stroke:0.22px currentColor">Количество</div>
<div style="position:absolute;left:465.60px;top:339.81px;font-size:9.39px;line-height:9.39px;font-weight:400;color:#333;letter-spacing:-0.353px;white-space:pre;-webkit-text-stroke:0.22px currentColor">Ед.</div>
<div style="position:absolute;left:505.50px;top:340.80px;font-size:9.23px;line-height:9.23px;font-weight:400;color:#333;letter-spacing:-0.507px;white-space:pre;-webkit-text-stroke:0.22px currentColor">Цена</div>
<div style="position:absolute;left:572.90px;top:340.80px;font-size:9.8px;line-height:9.8px;font-weight:400;color:#333;letter-spacing:-0.052px;white-space:pre;-webkit-text-stroke:0.22px currentColor">Скидка авт.</div>
<div style="position:absolute;left:721.50px;top:339.81px;font-size:9.39px;line-height:9.39px;font-weight:400;color:#333;letter-spacing:-0.382px;white-space:pre;-webkit-text-stroke:0.22px currentColor">Сумма</div>
<div style="position:absolute;left:796.90px;top:340.80px;font-size:9.21px;line-height:9.21px;font-weight:400;color:#333;letter-spacing:-0.523px;white-space:pre;-webkit-text-stroke:0.22px currentColor">% НДС</div>
<div style="position:absolute;left:845.20px;top:339.81px;font-size:9.44px;line-height:9.44px;font-weight:400;color:#333;letter-spacing:-0.304px;white-space:pre;-webkit-text-stroke:0.22px currentColor">Сумма НДС</div>
<div style="position:absolute;left:936.50px;top:340.81px;font-size:9.2px;line-height:9.2px;font-weight:400;color:#333;letter-spacing:-0.434px;white-space:pre;-webkit-text-stroke:0.22px currentColor">Всего</div>
<div style="position:absolute;left:61.30px;top:367.01px;font-size:9.4px;line-height:9.4px;font-weight:400;color:#666;letter-spacing:0.000px;white-space:pre;">1</div>
<div style="position:absolute;left:81.80px;top:368.01px;font-size:9.14px;line-height:9.14px;font-weight:400;color:#4d4d4d;letter-spacing:-0.142px;white-space:pre;">Корзина для белья ЗЕБРА</div>
<div style="position:absolute;left:415.97px;top:368.02px;font-size:9.21px;line-height:9.21px;font-weight:400;color:#5a5a5a;letter-spacing:-0.113px;white-space:pre;">1,000</div>
<div style="position:absolute;left:466.30px;top:368.02px;font-size:9.28px;line-height:9.28px;font-weight:400;color:#5a5a5a;letter-spacing:-0.159px;white-space:pre;">шт</div>
<div style="position:absolute;left:510.21px;top:368.01px;font-size:9.24px;line-height:9.24px;font-weight:400;color:#5a5a5a;letter-spacing:-0.085px;white-space:pre;">1 699,00</div>
<div style="position:absolute;left:608.24px;top:368.01px;font-size:9.2px;line-height:9.2px;font-weight:400;color:#5a5a5a;letter-spacing:-0.127px;white-space:pre;">5,00</div>
<div style="position:absolute;left:683.82px;top:368.01px;font-size:9.24px;line-height:9.24px;font-weight:400;color:#5a5a5a;letter-spacing:-0.096px;white-space:pre;">84,95</div>
<div style="position:absolute;left:733.46px;top:368.00px;font-size:9.23px;line-height:9.23px;font-weight:400;color:#5a5a5a;letter-spacing:-0.094px;white-space:pre;">1 589,31</div>
<div style="position:absolute;left:797.00px;top:368.00px;font-size:9.03px;line-height:9.03px;font-weight:400;color:#5a5a5a;letter-spacing:-0.350px;white-space:pre;">20%</div>
<div style="position:absolute;left:881.31px;top:368.01px;font-size:9.27px;line-height:9.27px;font-weight:400;color:#5a5a5a;letter-spacing:-0.077px;white-space:pre;">264,89</div>
<div style="position:absolute;left:944.66px;top:368.00px;font-size:9.23px;line-height:9.23px;font-weight:400;color:#5a5a5a;letter-spacing:-0.094px;white-space:pre;">1 589,31</div>
<div style="position:absolute;left:61.30px;top:393.01px;font-size:9.4px;line-height:9.4px;font-weight:400;color:#666;letter-spacing:0.000px;white-space:pre;">2</div>
<div style="position:absolute;left:81.80px;top:394.00px;font-size:9.15px;line-height:9.15px;font-weight:400;color:#5a5a5a;letter-spacing:-0.132px;white-space:pre;">Мешки хозяйственные ПРОФИ черные ("AVIKOMP"), 160л/10шт</div>
<div style="position:absolute;left:410.61px;top:394.01px;font-size:9.27px;line-height:9.27px;font-weight:400;color:#5a5a5a;letter-spacing:-0.077px;white-space:pre;">20,000</div>
<div style="position:absolute;left:466.30px;top:394.02px;font-size:9.28px;line-height:9.28px;font-weight:400;color:#5a5a5a;letter-spacing:-0.159px;white-space:pre;">шт</div>
<div style="position:absolute;left:517.61px;top:394.01px;font-size:9.27px;line-height:9.27px;font-weight:400;color:#5a5a5a;letter-spacing:-0.077px;white-space:pre;">209,00</div>
<div style="position:absolute;left:608.24px;top:394.01px;font-size:9.2px;line-height:9.2px;font-weight:400;color:#5a5a5a;letter-spacing:-0.127px;white-space:pre;">5,00</div>
<div style="position:absolute;left:678.61px;top:394.01px;font-size:9.27px;line-height:9.27px;font-weight:400;color:#5a5a5a;letter-spacing:-0.077px;white-space:pre;">209,00</div>
<div style="position:absolute;left:733.46px;top:394.00px;font-size:9.23px;line-height:9.23px;font-weight:400;color:#5a5a5a;letter-spacing:-0.094px;white-space:pre;">3 910,14</div>
<div style="position:absolute;left:797.00px;top:394.00px;font-size:9.03px;line-height:9.03px;font-weight:400;color:#5a5a5a;letter-spacing:-0.350px;white-space:pre;">20%</div>
<div style="position:absolute;left:881.45px;top:394.01px;font-size:9.25px;line-height:9.25px;font-weight:400;color:#5a5a5a;letter-spacing:-0.090px;white-space:pre;">651,69</div>
<div style="position:absolute;left:944.66px;top:394.00px;font-size:9.23px;line-height:9.23px;font-weight:400;color:#5a5a5a;letter-spacing:-0.094px;white-space:pre;">3 910,14</div>
<div style="position:absolute;left:61.30px;top:418.71px;font-size:9.4px;line-height:9.4px;font-weight:400;color:#666;letter-spacing:0.000px;white-space:pre;">3</div>
<div style="position:absolute;left:81.80px;top:419.71px;font-size:9.16px;line-height:9.16px;font-weight:400;color:#5a5a5a;letter-spacing:-0.133px;white-space:pre;">Доска гладильная  ЭЛЬЗА ДЕ ЛЮКС (МЕТАЛЛ)</div>
<div style="position:absolute;left:415.97px;top:419.71px;font-size:9.21px;line-height:9.21px;font-weight:400;color:#5a5a5a;letter-spacing:-0.113px;white-space:pre;">1,000</div>
<div style="position:absolute;left:466.30px;top:419.72px;font-size:9.28px;line-height:9.28px;font-weight:400;color:#5a5a5a;letter-spacing:-0.159px;white-space:pre;">шт</div>
<div style="position:absolute;left:510.07px;top:419.70px;font-size:9.26px;line-height:9.26px;font-weight:400;color:#5a5a5a;letter-spacing:-0.075px;white-space:pre;">6 025,00</div>
<div style="position:absolute;left:608.24px;top:419.71px;font-size:9.2px;line-height:9.2px;font-weight:400;color:#5a5a5a;letter-spacing:-0.127px;white-space:pre;">5,00</div>
<div style="position:absolute;left:678.75px;top:419.71px;font-size:9.25px;line-height:9.25px;font-weight:400;color:#5a5a5a;letter-spacing:-0.090px;white-space:pre;">301,25</div>
<div style="position:absolute;left:733.17px;top:419.70px;font-size:9.26px;line-height:9.26px;font-weight:400;color:#5a5a5a;letter-spacing:-0.075px;white-space:pre;">5 636,02</div>
<div style="position:absolute;left:797.00px;top:419.71px;font-size:9.03px;line-height:9.03px;font-weight:400;color:#5a5a5a;letter-spacing:-0.350px;white-space:pre;">20%</div>
<div style="position:absolute;left:881.31px;top:419.71px;font-size:9.27px;line-height:9.27px;font-weight:400;color:#5a5a5a;letter-spacing:-0.077px;white-space:pre;">939,34</div>
<div style="position:absolute;left:944.37px;top:419.70px;font-size:9.26px;line-height:9.26px;font-weight:400;color:#5a5a5a;letter-spacing:-0.075px;white-space:pre;">5 636,02</div>
<div style="position:absolute;left:61.30px;top:444.41px;font-size:9.4px;line-height:9.4px;font-weight:400;color:#666;letter-spacing:0.000px;white-space:pre;">4</div>
<div style="position:absolute;left:81.80px;top:445.40px;font-size:9.09px;line-height:9.09px;font-weight:400;color:#5a5a5a;letter-spacing:-0.171px;white-space:pre;">Вышка-тура алюминиевая ТЕХНО-3 ("АЛЮМЕТ")</div>
<div style="position:absolute;left:415.97px;top:445.41px;font-size:9.21px;line-height:9.21px;font-weight:400;color:#5a5a5a;letter-spacing:-0.113px;white-space:pre;">1,000</div>
<div style="position:absolute;left:466.30px;top:445.41px;font-size:9.28px;line-height:9.28px;font-weight:400;color:#5a5a5a;letter-spacing:-0.159px;white-space:pre;">шт</div>
<div style="position:absolute;left:505.28px;top:445.41px;font-size:9.23px;line-height:9.23px;font-weight:400;color:#5a5a5a;letter-spacing:-0.091px;white-space:pre;">14 151,00</div>
<div style="position:absolute;left:608.24px;top:445.40px;font-size:9.2px;line-height:9.2px;font-weight:400;color:#5a5a5a;letter-spacing:-0.127px;white-space:pre;">5,00</div>
<div style="position:absolute;left:678.61px;top:445.41px;font-size:9.27px;line-height:9.27px;font-weight:400;color:#5a5a5a;letter-spacing:-0.077px;white-space:pre;">707,55</div>
<div style="position:absolute;left:728.24px;top:445.41px;font-size:9.25px;line-height:9.25px;font-weight:400;color:#5a5a5a;letter-spacing:-0.083px;white-space:pre;">13 237,41</div>
<div style="position:absolute;left:797.00px;top:445.41px;font-size:9.03px;line-height:9.03px;font-weight:400;color:#5a5a5a;letter-spacing:-0.350px;white-space:pre;">20%</div>
<div style="position:absolute;left:873.77px;top:445.41px;font-size:9.26px;line-height:9.26px;font-weight:400;color:#5a5a5a;letter-spacing:-0.075px;white-space:pre;">2 206,24</div>
<div style="position:absolute;left:939.44px;top:445.41px;font-size:9.25px;line-height:9.25px;font-weight:400;color:#5a5a5a;letter-spacing:-0.083px;white-space:pre;">13 237,41</div>
<div style="position:absolute;left:61.30px;top:470.12px;font-size:9.4px;line-height:9.4px;font-weight:400;color:#666;letter-spacing:0.000px;white-space:pre;">5</div>
<div style="position:absolute;left:81.80px;top:471.10px;font-size:9.25px;line-height:9.25px;font-weight:400;color:#5a5a5a;letter-spacing:-0.076px;white-space:pre;">Канистра металлическая крашеная (Россия), 20 л.</div>
<div style="position:absolute;left:415.82px;top:471.11px;font-size:9.24px;line-height:9.24px;font-weight:400;color:#5a5a5a;letter-spacing:-0.096px;white-space:pre;">3,000</div>
<div style="position:absolute;left:466.30px;top:471.11px;font-size:9.28px;line-height:9.28px;font-weight:400;color:#5a5a5a;letter-spacing:-0.159px;white-space:pre;">шт</div>
<div style="position:absolute;left:510.07px;top:471.11px;font-size:9.26px;line-height:9.26px;font-weight:400;color:#5a5a5a;letter-spacing:-0.075px;white-space:pre;">2 083,00</div>
<div style="position:absolute;left:608.24px;top:471.12px;font-size:9.2px;line-height:9.2px;font-weight:400;color:#5a5a5a;letter-spacing:-0.127px;white-space:pre;">5,00</div>
<div style="position:absolute;left:678.75px;top:471.10px;font-size:9.25px;line-height:9.25px;font-weight:400;color:#5a5a5a;letter-spacing:-0.090px;white-space:pre;">312,45</div>
<div style="position:absolute;left:733.17px;top:471.11px;font-size:9.26px;line-height:9.26px;font-weight:400;color:#5a5a5a;letter-spacing:-0.075px;white-space:pre;">5 845,56</div>
<div style="position:absolute;left:797.00px;top:471.10px;font-size:9.03px;line-height:9.03px;font-weight:400;color:#5a5a5a;letter-spacing:-0.350px;white-space:pre;">20%</div>
<div style="position:absolute;left:881.31px;top:471.10px;font-size:9.27px;line-height:9.27px;font-weight:400;color:#5a5a5a;letter-spacing:-0.077px;white-space:pre;">974,26</div>
<div style="position:absolute;left:944.37px;top:471.11px;font-size:9.26px;line-height:9.26px;font-weight:400;color:#5a5a5a;letter-spacing:-0.075px;white-space:pre;">5 845,56</div>
<div style="position:absolute;left:61.30px;top:495.81px;font-size:9.4px;line-height:9.4px;font-weight:400;color:#666;letter-spacing:0.000px;white-space:pre;">6</div>
<div style="position:absolute;left:81.80px;top:496.81px;font-size:9.18px;line-height:9.18px;font-weight:400;color:#5a5a5a;letter-spacing:-0.113px;white-space:pre;">Корзина для хранения "ВЕЛЕТТА" , 21*11*5 см</div>
<div style="position:absolute;left:415.82px;top:496.81px;font-size:9.24px;line-height:9.24px;font-weight:400;color:#5a5a5a;letter-spacing:-0.096px;white-space:pre;">4,000</div>
<div style="position:absolute;left:466.30px;top:496.81px;font-size:9.28px;line-height:9.28px;font-weight:400;color:#5a5a5a;letter-spacing:-0.159px;white-space:pre;">шт</div>
<div style="position:absolute;left:517.61px;top:496.82px;font-size:9.27px;line-height:9.27px;font-weight:400;color:#5a5a5a;letter-spacing:-0.077px;white-space:pre;">836,00</div>
<div style="position:absolute;left:608.24px;top:496.81px;font-size:9.2px;line-height:9.2px;font-weight:400;color:#5a5a5a;letter-spacing:-0.127px;white-space:pre;">5,00</div>
<div style="position:absolute;left:678.75px;top:496.80px;font-size:9.25px;line-height:9.25px;font-weight:400;color:#5a5a5a;letter-spacing:-0.090px;white-space:pre;">167,20</div>
<div style="position:absolute;left:734.29px;top:496.81px;font-size:9.2px;line-height:9.2px;font-weight:400;color:#5a5a5a;letter-spacing:-0.104px;white-space:pre;">3 128,11</div>
<div style="position:absolute;left:797.00px;top:496.80px;font-size:9.03px;line-height:9.03px;font-weight:400;color:#5a5a5a;letter-spacing:-0.350px;white-space:pre;">20%</div>
<div style="position:absolute;left:881.45px;top:496.80px;font-size:9.25px;line-height:9.25px;font-weight:400;color:#5a5a5a;letter-spacing:-0.090px;white-space:pre;">521,35</div>
<div style="position:absolute;left:945.49px;top:496.81px;font-size:9.2px;line-height:9.2px;font-weight:400;color:#5a5a5a;letter-spacing:-0.104px;white-space:pre;">3 128,11</div>
<div style="position:absolute;left:19.30px;top:544.32px;font-size:9.99px;line-height:9.99px;font-weight:400;color:#959595;letter-spacing:-0.005px;white-space:pre;">Комментарий</div>
<div style="position:absolute;left:527.80px;top:544.82px;font-size:9.73px;line-height:9.73px;font-weight:400;color:#5a5a5a;letter-spacing:-0.128px;white-space:pre;">Скидка руч., Σ:</div>
<div style="position:absolute;left:631.30px;top:544.80px;font-size:9.38px;line-height:9.38px;font-weight:400;color:#444;letter-spacing:-0.129px;white-space:pre;">519,05</div>
<div style="position:absolute;left:698.70px;top:544.80px;font-size:9.71px;line-height:9.71px;font-weight:400;color:#5a5a5a;letter-spacing:-0.216px;white-space:pre;">НДС:</div>
<div style="position:absolute;left:791.80px;top:544.80px;font-size:9.23px;line-height:9.23px;font-weight:400;color:#555;letter-spacing:-0.197px;white-space:pre;">5 557,77</div>
<div style="position:absolute;left:850.30px;top:544.81px;font-size:9.76px;line-height:9.76px;font-weight:400;color:#5a5a5a;letter-spacing:-0.130px;white-space:pre;">Всего:</div>
<div style="position:absolute;left:926.90px;top:543.81px;font-size:9.39px;line-height:9.39px;font-weight:400;color:#444;letter-spacing:-0.114px;white-space:pre;">33 346,55</div>
<div style="position:absolute;left:662.90px;top:582.91px;font-size:10.02px;line-height:10.02px;font-weight:400;color:#2a2a2a;letter-spacing:-0.253px;white-space:pre;-webkit-text-stroke:0.32px currentColor">Провести и закрыть</div>
<div style="position:absolute;left:774.00px;top:582.90px;font-size:9.94px;line-height:9.94px;font-weight:400;color:#2a2a2a;letter-spacing:-0.327px;white-space:pre;-webkit-text-stroke:0.32px currentColor">Записать</div>
<div style="position:absolute;left:843.10px;top:582.90px;font-size:9.96px;line-height:9.96px;font-weight:400;color:#2a2a2a;letter-spacing:-0.326px;white-space:pre;-webkit-text-stroke:0.32px currentColor">Провести</div>
<div style="position:absolute;left:907.40px;top:582.91px;font-size:9.91px;line-height:9.91px;font-weight:400;color:#9a9a9a;letter-spacing:-0.320px;white-space:pre;">Отменить проведение</div>
</div></body></html>
